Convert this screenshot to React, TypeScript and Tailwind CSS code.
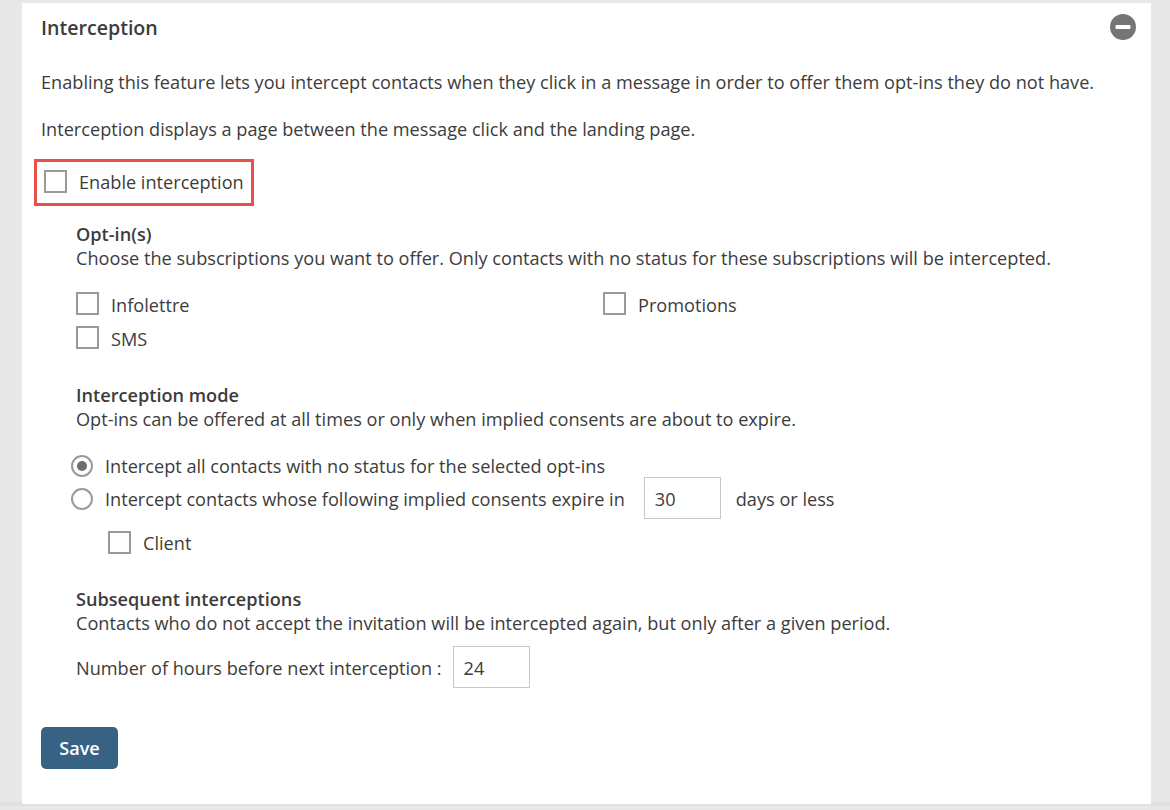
function Box() {
  return <span className="block w-[23px] h-[23px] -mt-[1px] border-2 border-[#9a9a9a] bg-white shrink-0" />;
}
function Radio({ on }: { on?: boolean }) {
  return (
    <span className="flex items-center justify-center w-[22px] h-[22px] rounded-full border-2 border-[#9a9a9a] bg-white shrink-0">
      {on && <span className="block w-[10px] h-[10px] rounded-full bg-[#6e6e6e]" />}
    </span>
  );
}
function Input({ value, w }: { value: string; w: string }) {
  return (
    <span className={`flex items-center h-[42px] -mt-[2px] border border-[#c8c8c8] bg-white pl-[10px] ${w}`}>
      <span className="pt-[2px]">{value}</span>
    </span>
  );
}
export default function App() {
  return (
    <div className="h-[810px] w-[1170px] overflow-hidden bg-[#e8e8e8] text-[#3c3c3c] text-[18.15px] leading-[24px] font-['Open_Sans',sans-serif]">
      <div className="h-[806px] border-b-4 border-[#e0e0e0] pt-[3px] pl-[22px] pr-[19px]">
        <div className="relative h-[801px] bg-white pl-[19px] pt-[13px]">
          <h2 className="text-[19.6px] font-semibold leading-[24px]">Interception</h2>
          <svg className="absolute right-[15px] top-[11px]" width="26" height="26" viewBox="0 0 26 26">
            <circle cx="13" cy="13" r="13" fill="#757575" />
            <rect x="5.5" y="11" width="15" height="4" rx="1" fill="#fff" />
          </svg>
          <p className="mt-[30px]">Enabling this feature lets you intercept contacts when they click in a message in order to offer them opt-ins they do not have.</p>
          <p className="mt-[23px]">Interception displays a page between the message click and the landing page.</p>
          <div className="mt-[18px] -ml-[7px] flex items-center w-[220px] h-[47px] border-[3px] border-[#e8504a] pl-[7px] pb-[2px] gap-[12px]">
            <Box />
            <span>Enable interception</span>
          </div>
          <div className="pl-[35px]">
            <h3 className="mt-[16px] font-semibold">Opt-in(s)</h3>
            <p>Choose the subscriptions you want to offer. Only contacts with no status for these subscriptions will be intercepted.</p>
            <div className="mt-[22px] grid grid-cols-[527px_1fr] gap-y-[10px]">
              <label className="flex items-center gap-[12px] h-[24px]"><Box /><span className="pt-[2px]">Infolettre</span></label>
              <label className="flex items-center gap-[12px] h-[24px]"><Box /><span className="pt-[2px]">Promotions</span></label>
              <label className="flex items-center gap-[12px] h-[24px]"><Box /><span className="pt-[2px]">SMS</span></label>
            </div>
            <h3 className="mt-[33px] font-semibold">Interception mode</h3>
            <p>Opt-ins can be offered at all times or only when implied consents are about to expire.</p>
            <div className="mt-[23px] -ml-[5px] flex items-center gap-[12px] h-[24px]"><Radio on />Intercept all contacts with no status for the selected opt-ins</div>
            <div className="mt-[9px] -ml-[5px] flex items-center gap-[12px] h-[24px]">
              <Radio />
              <span>Intercept contacts whose following implied consents expire in</span>
              <span className="ml-[7px]"><Input value="30" w="w-[77px]" /></span>
              <span className="ml-[3px]">days or less</span>
            </div>
            <div className="mt-[20px] ml-[32px] flex items-center gap-[12px] h-[24px]"><Box />Client</div>
            <h3 className="mt-[32px] font-semibold">Subsequent interceptions</h3>
            <p>Contacts who do not accept the invitation will be intercepted again, but only after a given period.</p>
            <div className="mt-[12px] flex items-center gap-[11px] h-[42px]">
              <span>Number of hours before next interception :</span>
              <Input value="24" w="w-[77px]" />
            </div>
          </div>
          <button className="mt-[38px] block w-[77px] h-[42px] rounded-[5px] bg-[#386283] text-white font-semibold">Save</button>
        </div>
      </div>
    </div>
  );
}
